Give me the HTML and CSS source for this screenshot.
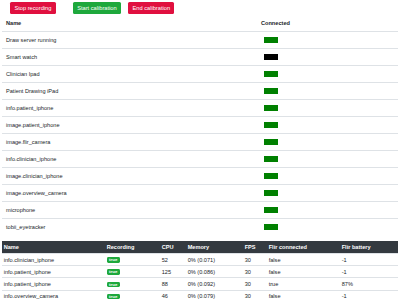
FILE: index.html
```html
<!DOCTYPE html>
<html>
<head>
<meta charset="utf-8">
<link rel="stylesheet" href="styles.css">
</head>
<body>
<div class="page">
  <div class="toolbar">
    <button class="btn btn-red">Stop recording</button>
    <div class="calib">
      <button class="btn btn-green">Start calibration</button>
      <button class="btn btn-red">End calibration</button>
    </div>
  </div>
  <table class="devices">
    <thead>
      <tr><th class="col-name">Name</th><th>Connected</th></tr>
    </thead>
    <tbody>
      <tr><td>Draw server running</td><td><span class="dot on"></span></td></tr>
      <tr><td>Smart watch</td><td><span class="dot off"></span></td></tr>
      <tr><td>Clinician Ipad</td><td><span class="dot on"></span></td></tr>
      <tr><td>Patient Drawing iPad</td><td><span class="dot on"></span></td></tr>
      <tr><td>info.patient_iphone</td><td><span class="dot on"></span></td></tr>
      <tr><td>image.patient_iphone</td><td><span class="dot on"></span></td></tr>
      <tr><td>image.flir_camera</td><td><span class="dot on"></span></td></tr>
      <tr><td>info.clinician_iphone</td><td><span class="dot on"></span></td></tr>
      <tr><td>image.clinician_iphone</td><td><span class="dot on"></span></td></tr>
      <tr><td>image.overview_camera</td><td><span class="dot on"></span></td></tr>
      <tr><td>microphone</td><td><span class="dot on"></span></td></tr>
      <tr><td>tobii_eyetracker</td><td><span class="dot on"></span></td></tr>
    </tbody>
  </table>
  <table class="stats">
    <colgroup>
      <col class="c-name"><col class="c-rec"><col class="c-cpu"><col class="c-mem"><col class="c-fps"><col class="c-flir"><col>
    </colgroup>
    <thead>
      <tr><th>Name</th><th>Recording</th><th>CPU</th><th>Memory</th><th>FPS</th><th>Flir connected</th><th>Flir battery</th></tr>
    </thead>
    <tbody>
      <tr><td>info.clinician_iphone</td><td><span class="badge">true</span></td><td>52</td><td>0% (0.071)</td><td>30</td><td>false</td><td>-1</td></tr>
      <tr><td>info.patient_iphone</td><td><span class="badge">true</span></td><td>125</td><td>0% (0.086)</td><td>30</td><td>false</td><td>-1</td></tr>
      <tr><td>info.patient_iphone</td><td><span class="badge">true</span></td><td>88</td><td>0% (0.092)</td><td>30</td><td>true</td><td>87%</td></tr>
      <tr><td>info.overview_camera</td><td><span class="badge">true</span></td><td>46</td><td>0% (0.079)</td><td>30</td><td>false</td><td>-1</td></tr>
    </tbody>
  </table>
</div>
</body>
</html>
```
FILE: styles.css
```css
html, body {
  margin: 0;
  padding: 0;
  background: #fff;
}
body {
  font-family: "Liberation Sans", Arial, sans-serif;
  font-size: 5.6px;
  color: #212529;
}
.page {
  padding: 0 2px;
}
.toolbar {
  display: flex;
  align-items: center;
  padding: 1px 8px 0;
  height: 13px;
}
.calib {
  display: flex;
  gap: 7px;
  margin-left: 17px;
}
.btn {
  font-family: inherit;
  font-size: 5.7px;
  color: #fff;
  border: none;
  border-radius: 1.5px;
  height: 12px;
  padding: 0 4.4px;
  margin: 0;
  line-height: 12px;
}
.btn-red { background: #e0103f; }
.btn-green { background: #1ea83c; }

table {
  width: 100%;
  border-collapse: collapse;
}
.devices th, .devices td {
  text-align: left;
  padding: 0 4px;
  height: 16px;
  border-top: 1px solid #dee2e6;
  vertical-align: middle;
}
.devices thead th {
  border-top: none;
  border-bottom: 1px solid #dee2e6;
  font-weight: bold;
  height: 17px;
}
.devices .col-name {
  width: 247px;
}
.dot {
  display: block;
  width: 14px;
  height: 5.5px;
  margin-left: 3px;
}
.dot.on { background: #008000; }
.dot.off { background: #000; }

.stats {
  margin-top: 6px;
}
.stats th, .stats td {
  text-align: left;
  padding: 0 1.7px;
  height: 11.2px;
  border-top: 1px solid #dee2e6;
  vertical-align: middle;
  white-space: nowrap;
}
.stats thead th {
  background: #343a40;
  color: #fff;
  font-weight: bold;
  border-top: none;
  height: 12px;
}
.c-name { width: 103px; }
.c-rec { width: 55px; }
.c-cpu { width: 26px; }
.c-mem { width: 57px; }
.c-fps { width: 24px; }
.c-flir { width: 73px; }
.badge {
  display: inline-block;
  background: #1ea83c;
  color: #fff;
  font-weight: bold;
  font-size: 4.4px;
  line-height: 5.5px;
  padding: 0 2.4px;
  border-radius: 1.4px;
  vertical-align: middle;
}
```
